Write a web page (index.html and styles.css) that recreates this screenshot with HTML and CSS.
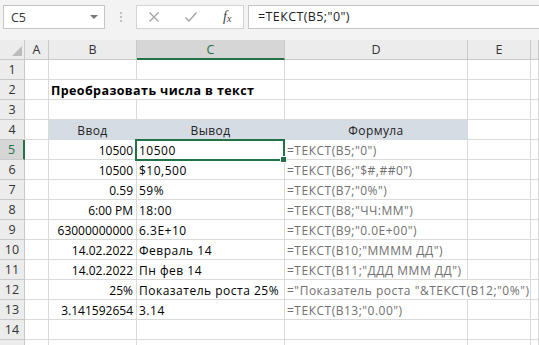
FILE: index.html
```html
<!DOCTYPE html>
<html lang="ru">
<head>
    <meta charset="UTF-8">
    <title>Преобразовать числа в текст</title>
    <link rel="stylesheet" href="styles.css">
</head>
<body>
    <div class="topbar">
        <div class="namebox">
            <span>C5</span>
            <span class="arrow"></span>
        </div>
        <div class="grip">
            <span></span><span></span><span></span>
        </div>
        <div class="buttons">
            <svg class="btn" width="12" height="12" viewBox="0 0 12 12">
                <path d="M1.5 1.5 L10.5 10.5 M10.5 1.5 L1.5 10.5" stroke="#a0a0a0" stroke-width="1.2" fill="none"/>
            </svg>
            <svg class="btn" width="14" height="12" viewBox="0 0 14 12">
                <path d="M1.5 6.5 L5 10 L12.5 1.5" stroke="#a0a0a0" stroke-width="1.3" fill="none"/>
            </svg>
            <span class="fxlabel">f<sub>x</sub></span>
        </div>
        <div class="formula">=ТЕКСТ(B5;"0")</div>
    </div>

    <div class="sheet">
        <!-- column headers -->
        <div class="ch corner"><span class="tri"></span></div>
        <div class="ch">A</div>
        <div class="ch">B</div>
        <div class="ch active">C</div>
        <div class="ch">D</div>
        <div class="ch">E</div>
        <div class="ch"></div>

        <div class="rh">1</div>
        <div class="c"></div><div class="c"></div><div class="c"></div><div class="c"></div><div class="c"></div><div class="c"></div>

        <div class="rh">2</div>
        <div class="c"></div>
        <div class="c title span2">Преобразовать числа в текст</div>
        <div class="c"></div><div class="c"></div><div class="c"></div>

        <div class="rh">3</div>
        <div class="c"></div><div class="c"></div><div class="c"></div><div class="c"></div><div class="c"></div><div class="c"></div>

        <div class="rh">4</div>
        <div class="c"></div>
        <div class="c head">Ввод</div>
        <div class="c head">Вывод</div>
        <div class="c head">Формула</div>
        <div class="c"></div><div class="c"></div>

        <div class="rh active">5</div>
        <div class="c"></div>
        <div class="c num">10500</div>
        <div class="c txt selected">10500<span class="sel"><span class="handle"></span></span></div>
        <div class="c fx">=ТЕКСТ(B5;"0")</div>
        <div class="c"></div><div class="c"></div>

        <div class="rh">6</div>
        <div class="c"></div>
        <div class="c num">10500</div>
        <div class="c txt">$10,500</div>
        <div class="c fx">=ТЕКСТ(B6;"$#,##0")</div>
        <div class="c"></div><div class="c"></div>

        <div class="rh">7</div>
        <div class="c"></div>
        <div class="c num">0.59</div>
        <div class="c txt">59%</div>
        <div class="c fx">=ТЕКСТ(B7;"0%")</div>
        <div class="c"></div><div class="c"></div>

        <div class="rh">8</div>
        <div class="c"></div>
        <div class="c num">6:00 PM</div>
        <div class="c txt">18:00</div>
        <div class="c fx">=ТЕКСТ(B8;"ЧЧ:ММ")</div>
        <div class="c"></div><div class="c"></div>

        <div class="rh">9</div>
        <div class="c"></div>
        <div class="c num">63000000000</div>
        <div class="c txt">6.3E+10</div>
        <div class="c fx">=ТЕКСТ(B9;"0.0E+00")</div>
        <div class="c"></div><div class="c"></div>

        <div class="rh">10</div>
        <div class="c"></div>
        <div class="c num">14.02.2022</div>
        <div class="c txt">Февраль 14</div>
        <div class="c fx">=ТЕКСТ(B10;"ММММ ДД")</div>
        <div class="c"></div><div class="c"></div>

        <div class="rh">11</div>
        <div class="c"></div>
        <div class="c num">14.02.2022</div>
        <div class="c txt">Пн фев 14</div>
        <div class="c fx">=ТЕКСТ(B11;"ДДД МММ ДД")</div>
        <div class="c"></div><div class="c"></div>

        <div class="rh">12</div>
        <div class="c"></div>
        <div class="c num">25%</div>
        <div class="c txt">Показатель роста 25%</div>
        <div class="c fx span2">="Показатель роста "&amp;ТЕКСТ(B12;"0%")</div>
        <div class="c"></div>

        <div class="rh">13</div>
        <div class="c"></div>
        <div class="c num">3.141592654</div>
        <div class="c txt">3.14</div>
        <div class="c fx">=ТЕКСТ(B13;"0.00")</div>
        <div class="c"></div><div class="c"></div>

        <div class="rh">14</div>
        <div class="c"></div><div class="c"></div><div class="c"></div><div class="c"></div><div class="c"></div><div class="c"></div>

        <div class="rh"></div>
        <div class="c"></div><div class="c"></div><div class="c"></div><div class="c"></div><div class="c"></div><div class="c"></div>
    </div>
</body>
</html>
```

FILE: styles.css
```css
body {
    margin: 0;
    width: 539px;
    height: 345px;
    overflow: hidden;
    background: #fff;
    font-family: "Open Sans", "Liberation Sans", sans-serif;
}
.topbar {
    height: 40px;
    box-sizing: border-box;
    padding-top: 5px;
    background: #f3f3f3;
    display: flex;
    align-items: flex-start;
}
.namebox {
    margin-left: 3px;
    width: 102px;
    height: 24px;
    box-sizing: border-box;
    border: 1px solid #c6c6c6;
    background: #fff;
    display: flex;
    align-items: center;
    justify-content: space-between;
    padding: 0 6px 0 7px;
    font-size: 12.5px;
    color: #333;
}
.arrow {
    width: 0;
    height: 0;
    border-left: 4px solid transparent;
    border-right: 4px solid transparent;
    border-top: 4px solid #777;
}
.grip {
    width: 31px;
    height: 24px;
    display: flex;
    flex-direction: column;
    align-items: center;
    justify-content: center;
    gap: 2px;
}
.grip span {
    width: 2px;
    height: 2px;
    background: #c0c0c0;
}
.buttons {
    width: 108px;
    height: 24px;
    box-sizing: border-box;
    border: 1px solid #d4d4d4;
    background: #fff;
    display: flex;
    align-items: center;
    padding-left: 11px;
    gap: 24px;
}
.fxlabel {
    font-family: "Liberation Serif", serif;
    font-style: italic;
    font-size: 14px;
    color: #444;
    margin-left: 1px;
}
.fxlabel sub {
    font-size: 10px;
    vertical-align: -1px;
}
.formula {
    margin-left: 4px;
    flex: 1;
    height: 24px;
    box-sizing: border-box;
    border: 1px solid #c6c6c6;
    border-right: none;
    background: #fff;
    padding-left: 9px;
    line-height: 22px;
    font-size: 12.5px;
    letter-spacing: 0.4px;
    color: #222;
    white-space: nowrap;
}
.sheet {
    display: grid;
    grid-template-columns: 25px 24px 88px 148px 183px 63px 8px;
    grid-auto-rows: 20px;
    font-size: 12px;
}
.ch, .rh {
    box-sizing: border-box;
    background: #ececec;
    border-right: 1px solid #c9c9c9;
    border-bottom: 1px solid #c9c9c9;
    color: #333;
    font-size: 12.5px;
    display: flex;
    align-items: center;
    justify-content: center;
}
.corner {
    position: relative;
}
.tri {
    position: absolute;
    right: 2px;
    bottom: 3px;
    width: 0;
    height: 0;
    border-left: 10px solid transparent;
    border-bottom: 10px solid #bcbcbc;
}
.ch.active {
    background: #d6d6d6;
    color: #217346;
    border-bottom: 2px solid #217346;
}
.rh.active {
    background: #d6d6d6;
    color: #217346;
    border-right: 2px solid #217346;
}
.c {
    box-sizing: border-box;
    border-right: 1px solid #dadada;
    border-bottom: 1px solid #dadada;
    line-height: 19px;
    padding-top: 1px;
    white-space: nowrap;
    color: #000;
}
.span2 {
    grid-column: span 2;
}
.title {
    font-weight: bold;
    font-size: 12.5px;
    letter-spacing: 0.4px;
    padding-left: 2px;
}
.head {
    background: #d6dce4;
    border-color: #d6dce4;
    text-align: center;
    letter-spacing: 0.4px;
    color: #222;
}
.num {
    text-align: right;
    padding-right: 3px;
}
.txt {
    padding-left: 2px;
    letter-spacing: 0.5px;
    overflow: hidden;
}
.fx {
    padding-left: 2px;
    letter-spacing: 0.5px;
    color: #707070;
}
.selected {
    position: relative;
    overflow: visible;
}
.sel {
    position: absolute;
    top: -1px;
    left: -2px;
    right: -1px;
    bottom: -2px;
    border: 2px solid #217346;
    pointer-events: none;
}
.handle {
    position: absolute;
    right: -4px;
    bottom: -4px;
    width: 5px;
    height: 5px;
    background: #217346;
    border: 1px solid #fff;
}
```
